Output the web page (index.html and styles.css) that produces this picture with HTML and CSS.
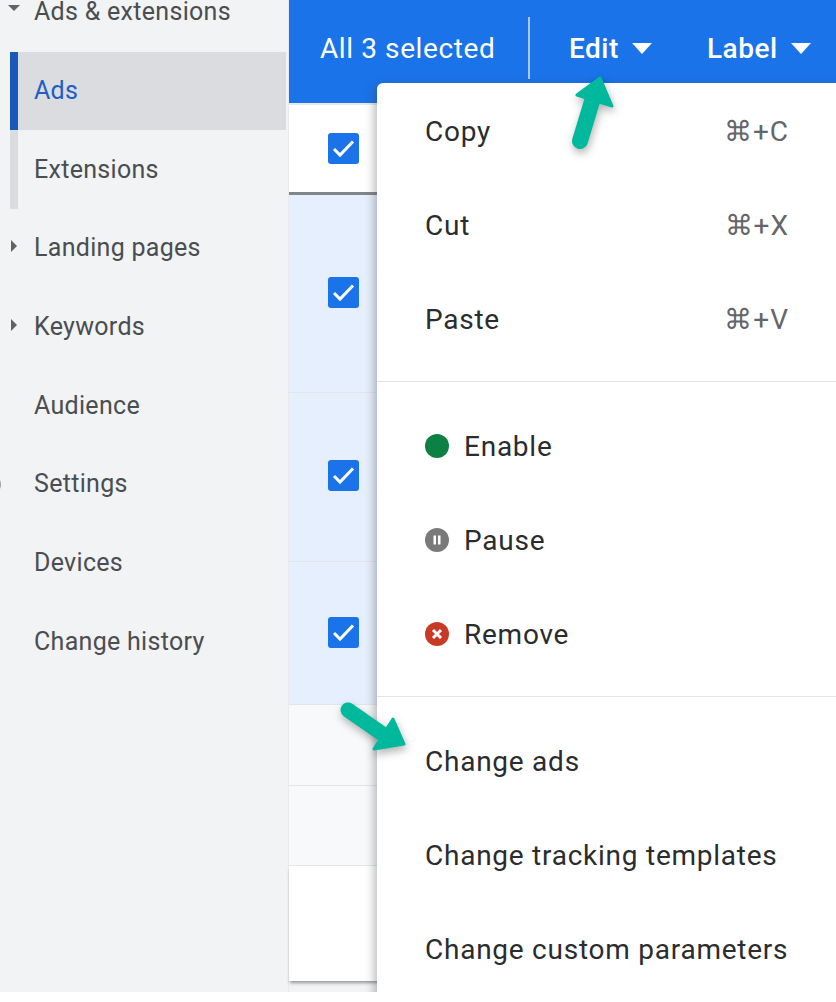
FILE: index.html
```html
<!DOCTYPE html>
<html lang="en">
<head>
<meta charset="utf-8">
<title>Ads</title>
<link rel="stylesheet" href="styles.css">
</head>
<body>
<div class="shot">
  <aside class="nav">
    <div class="nav-row"><svg class="caret caret-down" viewBox="0 0 12 8"><path d="M0 1h12L6 7z"/></svg>Ads &amp; extensions</div>
    <div class="subnav">
      <div class="nav-row sub active">Ads</div>
      <div class="nav-row sub">Extensions</div>
    </div>
    <div class="nav-row"><svg class="caret" viewBox="0 0 8 12"><path d="M1 0v12l6-6z"/></svg>Landing pages</div>
    <div class="nav-row"><svg class="caret" viewBox="0 0 8 12"><path d="M1 0v12l6-6z"/></svg>Keywords</div>
    <div class="nav-row">Audience</div>
    <div class="nav-row"><span class="edge-mark"></span>Settings</div>
    <div class="nav-row">Devices</div>
    <div class="nav-row">Change history</div>
  </aside>
  <main class="content">
    <header class="bar">
      <span class="count">All 3 selected</span>
      <span class="rule"></span>
      <span class="action action-edit">Edit<svg class="drop" viewBox="0 0 20 11"><path d="M0 0h20L10 11z"/></svg></span>
      <span class="action action-label">Label<svg class="drop" viewBox="0 0 20 11"><path d="M0 0h20L10 11z"/></svg></span>
    </header>
    <div class="table">
      <div class="row row-head"><span class="check"><svg viewBox="0 0 31 31"><path d="M6 16l6 6L25 8.500"/></svg></span></div>
      <div class="row row-a sel"><span class="check"><svg viewBox="0 0 31 31"><path d="M6 16l6 6L25 8.500"/></svg></span></div>
      <div class="row row-b sel"><span class="check"><svg viewBox="0 0 31 31"><path d="M6 16l6 6L25 8.500"/></svg></span></div>
      <div class="row row-c sel"><span class="check"><svg viewBox="0 0 31 31"><path d="M6 16l6 6L25 8.500"/></svg></span></div>
      <div class="row row-d"></div>
      <div class="row row-d2"></div>
      <div class="row row-e"></div>
    </div>
    <div class="menu">
      <div class="item"><span>Copy</span><span class="key">⌘+C</span></div>
      <div class="item"><span>Cut</span><span class="key">⌘+X</span></div>
      <div class="item"><span>Paste</span><span class="key">⌘+V</span></div>
      <div class="divider"></div>
      <div class="item start"><svg class="status" viewBox="0 0 24 24"><circle cx="12" cy="12" r="12" fill="#0d8043"/></svg><span>Enable</span></div>
      <div class="item start"><svg class="status" viewBox="0 0 24 24"><circle cx="12" cy="12" r="12" fill="#7a7a7a"/><path d="M8.500 7.500h2.500v9H8.500zM13 7.500h2.500v9H13z" fill="#fff"/></svg><span>Pause</span></div>
      <div class="item start"><svg class="status" viewBox="0 0 24 24"><circle cx="12" cy="12" r="12" fill="#c93a26"/><path d="M8 8l8 8M16 8l-8 8" stroke="#fff" stroke-width="3"/></svg><span>Remove</span></div>
      <div class="divider"></div>
      <div class="item">Change ads</div>
      <div class="item">Change tracking templates</div>
      <div class="item">Change custom parameters</div>
    </div>
  </main>
  <svg class="arrow arrow-up" viewBox="0 0 50 80"><path d="M13 71 26 28" fill="none" stroke="#00b89c" stroke-width="16" stroke-linecap="round"/><path d="M10 25 33 8 45 36z" fill="#00b89c" stroke="#00b89c" stroke-width="3" stroke-linejoin="round"/></svg>
  <svg class="arrow arrow-side" viewBox="0 0 80 60"><path d="M10 10 46 35" fill="none" stroke="#00b89c" stroke-width="15" stroke-linecap="round"/><path d="M55 19 66 44 36 49z" fill="#00b89c" stroke="#00b89c" stroke-width="3" stroke-linejoin="round"/></svg>
</div>
</body>
</html>
```
FILE: styles.css
```css
* { box-sizing: border-box; }
html, body { margin: 0; background: #fff; }
body { width: 836px; height: 1002px; overflow: hidden; font-family: Roboto, "Liberation Sans", sans-serif; }
.shot { position: relative; display: flex; width: 836px; height: 992px; overflow: hidden; background: #f1f3f4; }

.nav { width: 289px; flex: none; border-right: 1px solid #e8eaed; color: #4a4d51; font-size: 25px; letter-spacing: .3px; margin-top: -27px; }
.nav-row { position: relative; height: 78.700px; padding: 0 0 1px 34px; display: flex; align-items: center; }
.caret { position: absolute; left: 8px; top: 31px; width: 12px; height: 12px; fill: #5f6368; }
.caret-down { top: 29px; }
.edge-mark { position: absolute; left: -9px; top: 32px; width: 10px; height: 15px; border: 2px solid #9aa0a6; border-radius: 50%; }
.subnav { margin-left: 10px; width: 276px; }
.sub { padding-left: 16px; border-left: 8px solid #dadce0; }
.active { background: #dadce0; border-left-color: #185abc; color: #1f5fc4; }

.content { position: relative; flex: 1; min-width: 0; }
.bar { height: 103px; background: #1a73e8; color: #fff; font-size: 28px; letter-spacing: .6px; position: relative; }
.count { position: absolute; left: 31px; top: 32px; }
.rule { position: absolute; left: 239px; top: 17px; width: 2px; height: 62px; background: #a9c9f5; }
.action { position: absolute; top: 32px; display: flex; align-items: center; font-weight: 500; letter-spacing: .5px; }
.action-edit { left: 280px; }
.action-label { left: 418px; }
.drop { width: 20px; height: 11px; fill: #fff; margin-left: 13px; }

.table { display: flex; flex-direction: column; }
.row { position: relative; display: flex; align-items: center; padding-left: 39px; border-bottom: 1px solid #e3e5e8; background: #fff; }
.row-head { height: 92px; border-top: 2px solid #e8eaed; border-bottom: 3px solid #80868b; }
.row-a { height: 198px; padding-bottom: 3px; }
.row-b { height: 169px; padding-bottom: 3px; }
.row-c { height: 143px; padding-bottom: 2px; }
.row-d { height: 81px; background: #f8f9fa; }
.row-d2 { height: 80px; background: #f8f9fa; }
.row-e { height: 115px; border: 0; box-shadow: 0 3px 3px -1px rgba(60,64,67,.5); }
.sel { background: #e6effd; }
.check { width: 31px; height: 31px; background: #1a73e8; border-radius: 3px; }
.check svg { display: block; fill: none; stroke: #fff; stroke-width: 3; }

.menu { position: absolute; left: 88px; top: 83px; width: 480px; height: 930px; background: #fff; border-radius: 6px 0 0 0; box-shadow: -3px 3px 10px rgba(60,64,67,.35); color: #2a2c2f; font-size: 28px; letter-spacing: .75px; padding-top: 1px; }
.item { height: 94px; padding: 0 47px 0 48px; width: 459px; display: flex; align-items: center; justify-content: space-between; white-space: nowrap; }
.key { color: #63666a; letter-spacing: 1px; }
.start { justify-content: flex-start; gap: 15px; }
.status { width: 24px; height: 24px; flex: none; }
.divider { height: 1px; background: #e1e3e6; margin: 15px 0 17px; }

.arrow { position: absolute; overflow: visible; filter: drop-shadow(1px 4px 4px rgba(0,0,0,.3)); }
.arrow-up { left: 567px; top: 70px; width: 50px; height: 80px; }
.arrow-side { left: 338px; top: 700px; width: 80px; height: 60px; }
```
